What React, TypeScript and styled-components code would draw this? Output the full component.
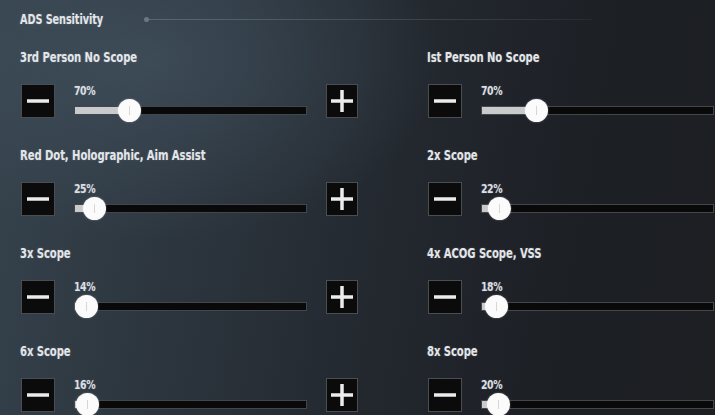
import styled, { createGlobalStyle } from 'styled-components';

const MAX_SENSITIVITY = 300;
const TRACK_WIDTH = 233;

const GlobalStyle = createGlobalStyle`
    html, body {
        margin: 0;
        padding: 0;
        background: #1d2127;
        overflow: hidden;
    }
    * {
        box-sizing: border-box;
    }
`

const Screen = styled.div`
    width: 715px;
    height: 415px;
    overflow: hidden;
    background:
        radial-gradient(ellipse 420px 260px at 150px 60px, rgba(72, 90, 104, 0.55), transparent 70%),
        linear-gradient(100deg, #36434d 0%, #2c353e 28%, #23282f 55%, #1c1f24 80%, #1d1f23 100%);
    font-family: 'DejaVu Sans Condensed', 'DejaVu Sans', sans-serif;
    font-weight: bold;
    color: #e3e6e9;
`

// condensed game font look: taller glyphs squeezed horizontally
const Condensed = styled.div<{ $size: number }>`
    font-size: ${({ $size }) => $size}px;
    white-space: nowrap;
    transform: scaleX(0.8);
    transform-origin: left center;
    text-shadow: 0 0 2px rgba(255, 255, 255, 0.22);
`

const Header = styled.div`
    display: flex;
    align-items: center;
    height: 38px;
    padding-left: 20px;
`

const Title = styled(Condensed)`
    width: 83px;
    line-height: 16px;
    letter-spacing: -0.1px;
`

const Rule = styled.div`
    position: relative;
    margin-left: 43px;
    width: 446px;
    height: 1px;
    background: linear-gradient(90deg, rgba(150, 165, 175, 0.35), rgba(120, 130, 140, 0.22) 80%, rgba(120, 130, 140, 0.1));

    &::before {
        content: '';
        position: absolute;
        left: -2px;
        top: -2px;
        width: 5px;
        height: 5px;
        border-radius: 50%;
        background: #6b7781;
    }
`

const Grid = styled.div`
    display: grid;
    grid-template-columns: 336px 336px;
    column-gap: 71px;
    padding-left: 21px;
`

const Setting = styled.div`
    height: 98px;
    padding-top: 11px;
`

const Label = styled(Condensed)`
    line-height: 17px;
    margin-left: -1px;
    letter-spacing: -0.1px;
`

const Controls = styled.div`
    display: flex;
    align-items: flex-start;
    gap: 19px;
    margin-top: 18px;
`

const StepButton = styled.div<{ $width?: number }>`
    flex: 0 0 auto;
    display: flex;
    align-items: center;
    justify-content: center;
    width: ${({ $width }) => $width || 34}px;
    height: 34px;
    background: #0b0b0c;
    border: 1px solid #4a4e53;
`

const SliderBox = styled.div`
    flex: 0 0 ${TRACK_WIDTH}px;
    width: ${TRACK_WIDTH}px;
`

const Percent = styled(Condensed)`
    line-height: 14px;
    letter-spacing: -0.5px;
    color: #dcdfe2;
`

const Track = styled.div`
    position: relative;
    margin-top: 8px;
    height: 9px;
    background: #09090a;
    border: 1px solid #43474c;
`

const Fill = styled.div`
    height: 100%;
    background: #c9cacc;
`

const Thumb = styled.div`
    position: absolute;
    top: 50%;
    width: 23px;
    height: 23px;
    margin-left: -11px;
    margin-top: -11.5px;
    border-radius: 50%;
    background: #fbfbfb;
    box-shadow: 0 0 2px rgba(255, 255, 255, 0.4);

    &::after {
        content: '';
        position: absolute;
        left: 11px;
        top: 7px;
        width: 1px;
        height: 9px;
        background: #d6d6d6;
    }
`

const Icon = ({ plus }: { plus?: boolean }) => (
    <svg width="24" height="24" viewBox="0 0 24 24">
        <rect x="1" y="10.25" width="22" height="3.5" fill="#ececec" />
        {plus && <rect x="10.25" y="1" width="3.5" height="22" fill="#ececec" />}
    </svg>
)

type SettingData = { label: string; value: number }

const settings: SettingData[] = [
    { label: '3rd Person No Scope', value: 70 },
    { label: 'Ist Person No Scope', value: 70 },
    { label: 'Red Dot, Holographic, Aim Assist', value: 25 },
    { label: '2x Scope', value: 22 },
    { label: '3x Scope', value: 14 },
    { label: '4x ACOG Scope, VSS', value: 18 },
    { label: '6x Scope', value: 16 },
    { label: '8x Scope', value: 20 },
]

const SensitivitySlider = ({ label, value }: SettingData) => {
    const pos = Math.round((value / MAX_SENSITIVITY) * TRACK_WIDTH)
    return (
        <Setting>
            <Label $size={14}>{label}</Label>
            <Controls>
                <StepButton><Icon /></StepButton>
                <SliderBox>
                    <Percent $size={13}>{value}%</Percent>
                    <Track>
                        <Fill style={{ width: pos }} />
                        <Thumb style={{ left: pos }} />
                    </Track>
                </SliderBox>
                <StepButton $width={32}><Icon plus /></StepButton>
            </Controls>
        </Setting>
    )
}

export default function App() {
    return (
        <Screen>
            <GlobalStyle />
            <Header>
                <Title $size={13.5}>ADS Sensitivity</Title>
                <Rule />
            </Header>
            <Grid>
                {settings.map((s) => (
                    <SensitivitySlider key={s.label} {...s} />
                ))}
            </Grid>
        </Screen>
    )
}
